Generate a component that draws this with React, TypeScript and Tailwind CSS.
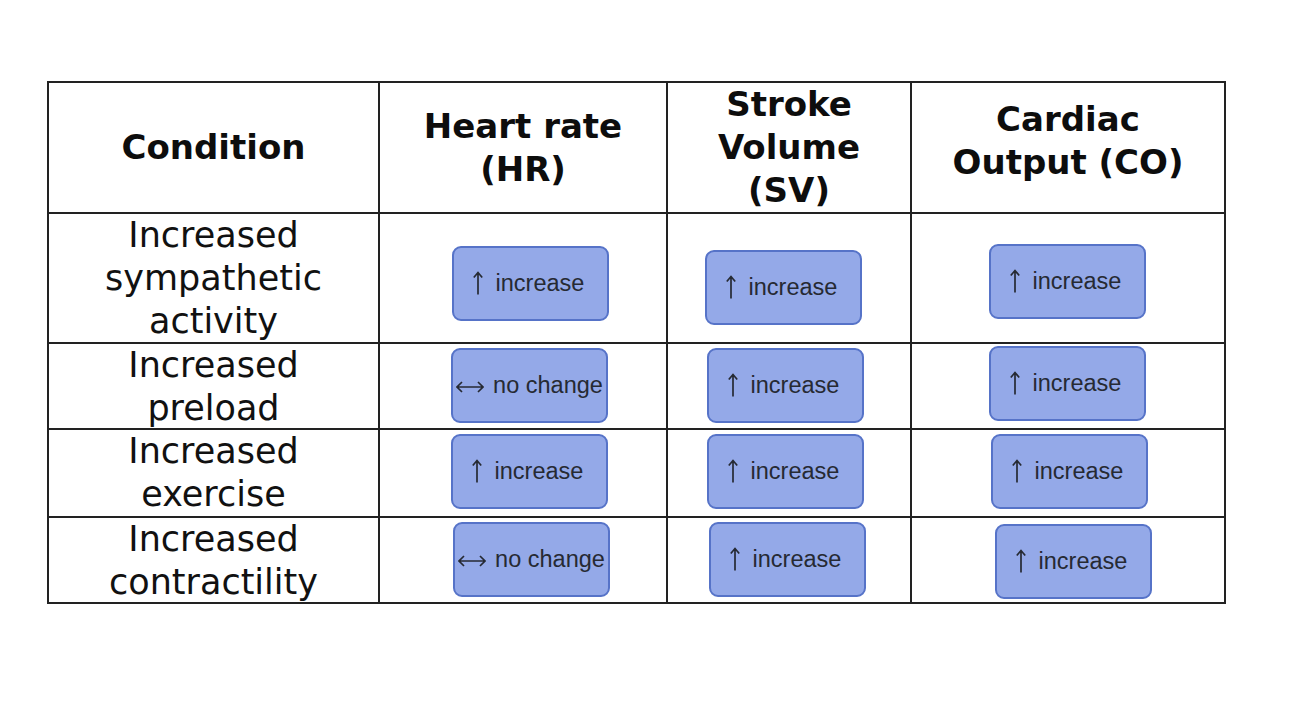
import type { ReactNode } from "react";

type Change = "up" | "none";

interface BoxSpot {
  value: Change;
  pad: string; // padding that places the card inside its cell
}

interface Row {
  condition: string[];
  height: string;
  cells: [BoxSpot, BoxSpot, BoxSpot];
}

const rows: Row[] = [
  {
    condition: ["Increased", "sympathetic", "activity"],
    height: "h-[130px]",
    cells: [
      { value: "up", pad: "pl-[72px] pt-[32px]" },
      { value: "up", pad: "pl-[37px] pt-[36px]" },
      { value: "up", pad: "pl-[77px] pt-[30px]" },
    ],
  },
  {
    condition: ["Increased", "preload"],
    height: "h-[86px]",
    cells: [
      { value: "none", pad: "pl-[71px] pt-[4px]" },
      { value: "up", pad: "pl-[39px] pt-[4px]" },
      { value: "up", pad: "pl-[77px] pt-[2px]" },
    ],
  },
  {
    condition: ["Increased", "exercise"],
    height: "h-[88px]",
    cells: [
      { value: "up", pad: "pl-[71px] pt-[4px]" },
      { value: "up", pad: "pl-[39px] pt-[4px]" },
      { value: "up", pad: "pl-[79px] pt-[4px]" },
    ],
  },
  {
    condition: ["Increased", "contractility"],
    height: "h-[86px]",
    cells: [
      { value: "none", pad: "pl-[73px] pt-[4px]" },
      { value: "up", pad: "pl-[41px] pt-[4px]" },
      { value: "up", pad: "pl-[83px] pt-[6px]" },
    ],
  },
];

const cols = "grid grid-cols-[329px_288px_244px_314px]";

function UpArrow() {
  return (
    <svg width="10" height="24" viewBox="0 0 10 24" className="shrink-0 mr-[13px] mt-[-2px]" aria-hidden>
      <path d="M5 1.5 V23.5 M0.8 6.5 L5 1.5 L9.2 6.5" fill="none" stroke="#262a33" strokeWidth="1.7" />
    </svg>
  );
}

function BothArrow() {
  return (
    <svg width="28" height="14" viewBox="0 0 28 14" className="shrink-0 mr-[9px] mt-[2px]" aria-hidden>
      <path d="M1 7 H27 M6 2 L1 7 L6 12 M22 2 L27 7 L22 12" fill="none" stroke="#262a33" strokeWidth="1.7" />
    </svg>
  );
}

function AnswerCard({ value }: { value: Change }) {
  return (
    <div className="w-[157px] h-[75px] shrink-0 rounded-[9px] border-2 border-[#5673c8] bg-[#94a9e8] flex items-center justify-center whitespace-nowrap text-[23.5px] text-[#262a33] font-['Liberation_Sans',Arial,sans-serif]">
      {value === "up" ? (
        <>
          <UpArrow />
          <span className="mr-[4px]">increase</span>
        </>
      ) : (
        <>
          <BothArrow />
          <span>no change</span>
        </>
      )}
    </div>
  );
}

function HeadCell({ children, first, extra }: { children: ReactNode; first?: boolean; extra?: string }) {
  return (
    <div
      className={`flex items-center justify-center text-center font-bold text-[34px] leading-[43px] text-[#0d0d0d] ${
        first ? "" : "border-l-2 border-[#222]"
      } ${extra ?? ""}`}
    >
      <div>{children}</div>
    </div>
  );
}

export default function App() {
  return (
    <div className="w-[1312px] h-[702px] bg-white overflow-hidden font-['DejaVu_Sans',Verdana,sans-serif]">
      <div className="ml-[47px] mt-[81px] w-[1179px] border-2 border-[#222]">
        {/* Header */}
        <div className={`${cols} h-[129px]`}>
          <HeadCell first>Condition</HeadCell>
          <HeadCell>
            Heart rate
            <br />
            (HR)
          </HeadCell>
          <HeadCell>
            Stroke
            <br />
            Volume
            <br />
            (SV)
          </HeadCell>
          <HeadCell extra="pb-[14px]">
            Cardiac
            <br />
            Output (CO)
          </HeadCell>
        </div>

        {/* Body rows */}
        {rows.map((row, i) => (
          <div key={i} className={`${cols} ${row.height} border-t-2 border-[#222]`}>
            <div className="flex items-center justify-center text-center text-[35px] leading-[43px] text-[#111]">
              <div>
                {row.condition.map((line) => (
                  <div key={line}>{line}</div>
                ))}
              </div>
            </div>
            {row.cells.map((cell, j) => (
              <div key={j} className={`flex items-start border-l-2 border-[#222] ${cell.pad}`}>
                <AnswerCard value={cell.value} />
              </div>
            ))}
          </div>
        ))}
      </div>
    </div>
  );
}
